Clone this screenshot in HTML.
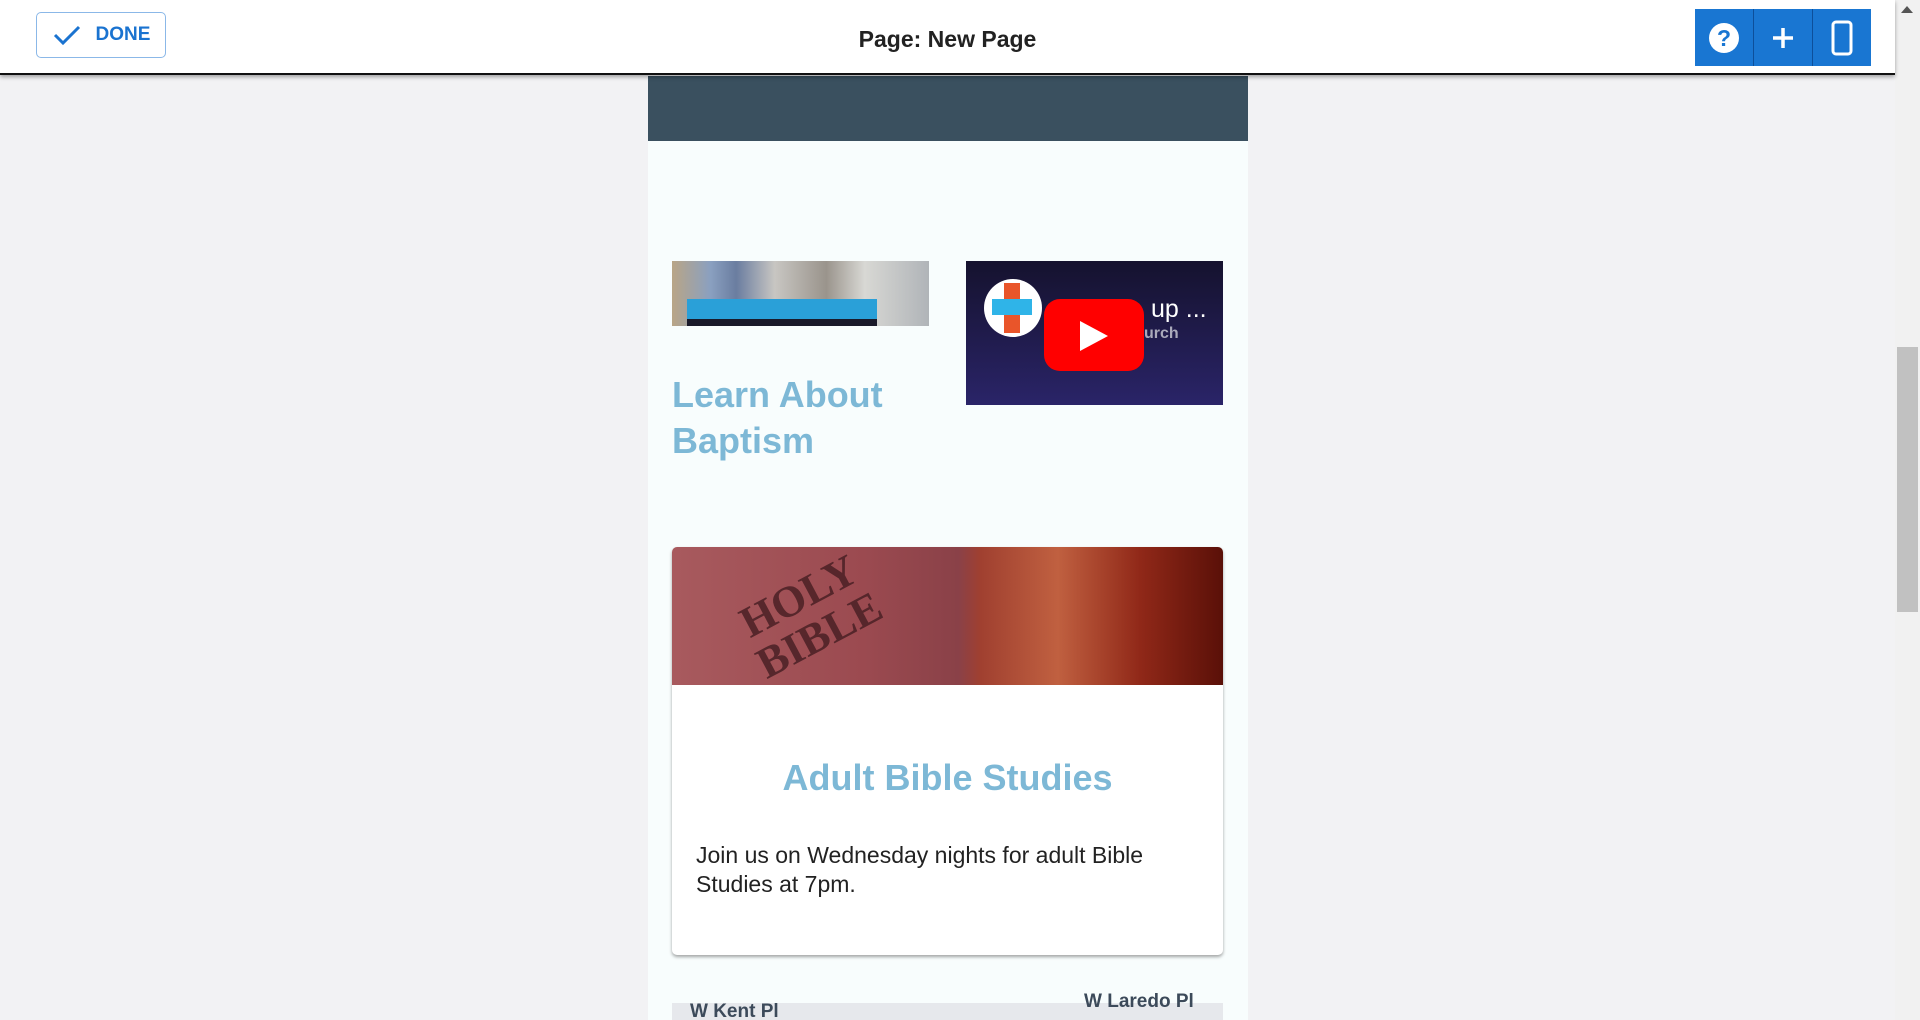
<!DOCTYPE html>
<html><head><meta charset="utf-8"><style>
*{margin:0;padding:0;box-sizing:border-box}
body{width:1920px;height:1020px;overflow:hidden;background:#f2f2f4;font-family:"Liberation Sans",Roboto,sans-serif;position:relative}
.hdr{position:absolute;left:0;top:0;width:1895px;height:75px;background:#fff;border-bottom:2px solid #111;box-shadow:0 2px 4px rgba(0,0,0,.35);z-index:5}
.done{position:absolute;left:36px;top:12px;width:130px;height:46px;border:1px solid #8bb8e8;border-radius:5px;color:#1a73d0;font-size:19px;font-weight:bold;display:flex;align-items:center;justify-content:center;gap:14px}
.title{position:absolute;left:0;width:1895px;top:26px;text-align:center;font-size:23px;font-weight:bold;color:#222}
.btns{position:absolute;left:1695px;top:9px;width:176px;height:57px;background:#1976d2;display:flex}
.btns div{flex:1;display:flex;align-items:center;justify-content:center;border-right:1px solid #0d4f9a}
.btns div:last-child{border:none}
.sb{position:absolute;left:1895px;top:0;width:25px;height:1020px;background:#f1f1f1}
.thumb{position:absolute;left:1897px;top:347px;width:21px;height:265px;background:#c1c1c1}
.panel{position:absolute;left:648px;top:76px;width:600px;height:944px;background:#f8fdfd;overflow:hidden}
.band{position:absolute;left:0;top:0;width:600px;height:65px;background:#3a505f}
.abs{position:absolute}
h2{color:#7db8d6;font-weight:bold}
</style></head><body>
<div class="hdr">
 <div class="done"><svg width="30" height="24" viewBox="0 0 30 24"><path d="M3 12 L11 20 L27 4" stroke="#1a73d0" stroke-width="3" fill="none"/></svg>DONE</div>
 <div class="title">Page: New Page</div>
 <div class="btns">
  <div><svg width="32" height="32" viewBox="0 0 32 32"><circle cx="16" cy="16" r="15" fill="#fff"/><text x="16" y="24" text-anchor="middle" font-size="23" font-weight="bold" fill="#1976d2" font-family="Liberation Sans">?</text></svg></div>
  <div><svg width="26" height="26" viewBox="0 0 26 26"><path d="M13 3V23M3 13H23" stroke="#fff" stroke-width="3.5"/></svg></div>
  <div><svg width="22" height="36" viewBox="0 0 22 36"><rect x="2" y="2" width="18" height="32" rx="3" fill="none" stroke="#fff" stroke-width="3"/></svg></div>
 </div>
</div>
<div class="sb"></div><div class="thumb"></div>
<div style="position:absolute;left:1901px;top:6px;width:0;height:0;border-left:6px solid transparent;border-right:6px solid transparent;border-bottom:7px solid #555"></div>
<div class="panel">
 <div class="band"></div>
 <div class="abs" style="left:24px;top:185px;width:257px;height:65px;background:linear-gradient(90deg,#b9a586 0%,#8aa0c0 15%,#6a7da0 25%,#c8c6c2 40%,#9a948c 60%,#d8d8d4 75%,#b0b4b8 100%)">
  <div class="abs" style="left:15px;top:38px;width:190px;height:27px;background:#2aa0d8"></div>
  <div class="abs" style="left:15px;top:58px;width:190px;height:7px;background:#1a1a2a"></div>
 </div>
 <div class="abs" style="left:318px;top:185px;width:257px;height:144px;background:linear-gradient(#15122e,#2a2468)">
  <div class="abs" style="left:18px;top:18px;width:58px;height:58px;border-radius:50%;background:#fff"></div>
  <div class="abs" style="left:38px;top:22px;width:16px;height:50px;background:#e9552a"></div>
  <div class="abs" style="left:26px;top:38px;width:40px;height:16px;background:#2fb4e8"></div>
  <div class="abs" style="left:78px;top:38px;width:100px;height:72px;border-radius:16px;background:#f00"></div>
  <svg class="abs" style="left:112px;top:58px" width="34" height="34" viewBox="0 0 34 34"><path d="M2 2L30 17L2 32Z" fill="#fff"/></svg>
  <div class="abs" style="left:185px;top:34px;color:#fff;font-size:25px">up ...</div>
  <div class="abs" style="left:178px;top:64px;color:#aab;font-size:16px;font-weight:bold">urch</div>
 </div>
 <h2 class="abs" style="left:24px;top:296px;font-size:36px;line-height:46px">Learn About<br>Baptism</h2>
 <div class="abs" style="left:24px;top:471px;width:551px;height:408px;background:#fff;border-radius:5px;box-shadow:0 2px 3px rgba(0,0,0,.35);overflow:hidden">
  <div style="height:138px;background:linear-gradient(90deg,#a85a5e 0%,#9b4a50 35%,#8a4148 52%,#a04030 56%,#c06040 70%,#902818 85%,#5a1008 100%);position:relative">
   <div class="abs" style="left:70px;top:25px;color:#4a2025;font-family:'Liberation Serif',serif;font-weight:bold;font-size:44px;line-height:44px;transform:rotate(-28deg);text-align:center;opacity:.85">HOLY<br>BIBLE</div>
  </div>
  <h2 style="text-align:center;font-size:36px;margin-top:71px;line-height:44px">Adult Bible Studies</h2>
  <p style="margin:41px 24px 0;font-size:23px;line-height:29px;color:#222">Join us on Wednesday nights for adult Bible Studies at 7pm.</p>
 </div>
 <div class="abs" style="left:24px;top:927px;width:551px;height:20px;background:#e6e8ec">
  <div class="abs" style="left:18px;top:-2px;font-size:19px;font-weight:bold;color:#3c4a5a">W Kent Pl</div>
  <div class="abs" style="left:412px;top:-12px;font-size:19px;font-weight:bold;color:#3c4a5a">W Laredo Pl</div>
 </div>
</div>
</body></html>
